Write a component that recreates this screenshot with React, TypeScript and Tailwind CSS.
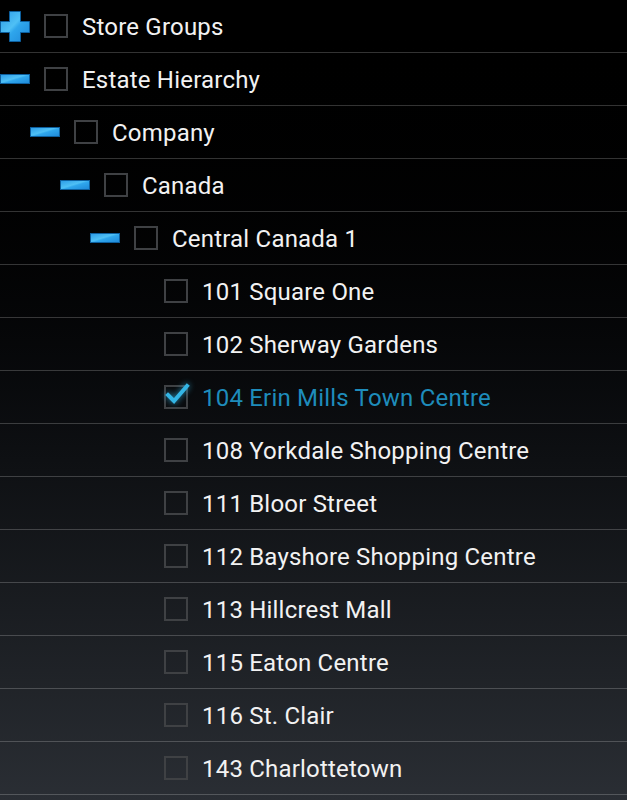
import { Fragment } from 'react'

type Node = {
  label: string
  level: number
  expander?: 'plus' | 'minus'
  checked?: boolean
}

const nodes: Node[] = [
  { label: 'Store Groups', level: 0, expander: 'plus' },
  { label: 'Estate Hierarchy', level: 0, expander: 'minus' },
  { label: 'Company', level: 1, expander: 'minus' },
  { label: 'Canada', level: 2, expander: 'minus' },
  { label: 'Central Canada 1', level: 3, expander: 'minus' },
  { label: '101 Square One', level: 4 },
  { label: '102 Sherway Gardens', level: 4 },
  { label: '104 Erin Mills Town Centre', level: 4, checked: true },
  { label: '108 Yorkdale Shopping Centre', level: 4 },
  { label: '111 Bloor Street', level: 4 },
  { label: '112 Bayshore Shopping Centre', level: 4 },
  { label: '113 Hillcrest Mall', level: 4 },
  { label: '115 Eaton Centre', level: 4 },
  { label: '116 St. Clair', level: 4 },
  { label: '143 Charlottetown', level: 4 },
]

const indent = ['pl-0', 'pl-[30px]', 'pl-[60px]', 'pl-[90px]', 'pl-[120px]']

function BlueDefs({ id }: { id: string }) {
  return (
    <defs>
      <linearGradient id={id} x1="0" y1="0" x2="1" y2="1">
        <stop offset="0" stopColor="#2a9ae6" />
        <stop offset="0.45" stopColor="#4fc0f5" />
        <stop offset="0.55" stopColor="#2fa6ec" />
        <stop offset="1" stopColor="#1e88d8" />
      </linearGradient>
    </defs>
  )
}

function Expander({ kind }: { kind: 'plus' | 'minus' }) {
  if (kind === 'plus') {
    return (
      <svg width="30" height="31" viewBox="0 0 30 31" className="block">
        <BlueDefs id="gp" />
        <path
          d="M9.5 0.5H20.5V10.5H29.5V21.5H20.5V30.5H9.5V21.5H0.5V10.5H9.5Z"
          fill="url(#gp)"
          stroke="#0d5f9e"
          strokeWidth="1"
        />
      </svg>
    )
  }
  return (
    <svg width="30" height="10" viewBox="0 0 30 10" className="block">
      <BlueDefs id="gm" />
      <rect x="0.5" y="0.5" width="29" height="9" fill="url(#gm)" stroke="#0d5f9e" strokeWidth="1" />
    </svg>
  )
}

function Checkbox({ checked }: { checked?: boolean }) {
  return (
    <div className="relative w-6 h-6 shrink-0 border-2 border-[#3f4144]">
      {checked && (
        <svg
          width="26"
          height="24"
          viewBox="0 0 26 24"
          className="absolute -top-[5px] -left-[1px] drop-shadow-[0_0_3px_rgba(51,181,229,0.8)]"
        >
          <path
            d="M3 13L9 19L22 4"
            fill="none"
            stroke="#33b5e5"
            strokeWidth="4"
            strokeLinecap="square"
          />
        </svg>
      )}
    </div>
  )
}

export default function App() {
  return (
    <div
      className="w-[627px] h-[800px] overflow-hidden bg-gradient-to-b from-black to-[#2a2e34]"
      style={{ fontFamily: 'Roboto, "Noto Sans", sans-serif' }}
    >
      {nodes.map((n) => (
        <Fragment key={n.label}>
          <div className={`flex items-center h-[52px] ${indent[n.level]}`}>
            <div className="w-[30px] flex justify-start items-center">
              {n.expander && <Expander kind={n.expander} />}
            </div>
            <div className="ml-[14px]">
              <Checkbox checked={n.checked} />
            </div>
            <span
              className={`ml-[14px] pt-[2px] text-[24px] leading-none tracking-[0.2px] ${
                n.checked ? 'text-[#1e8cbb]' : 'text-[#f2f2f2]'
              }`}
            >
              {n.label}
            </span>
          </div>
          <div className="h-px bg-white/20" />
        </Fragment>
      ))}
    </div>
  )
}
